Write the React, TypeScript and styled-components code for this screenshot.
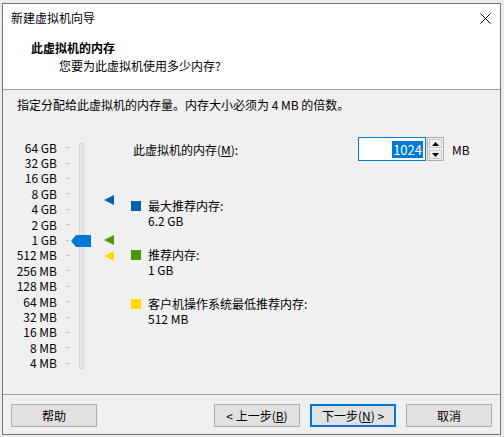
import React from 'react';
import styled, { createGlobalStyle } from 'styled-components';

const GlobalStyle = createGlobalStyle`
  html, body {
    margin: 0;
    padding: 0;
    background: #ececec;
  }
  body {
    font-family: "Noto Sans CJK SC", "Microsoft YaHei UI", sans-serif;
    font-size: 12px;
    color: #000;
  }
`;

// 刻度: 64 GB -> 4 MB
const scale = ['64 GB', '32 GB', '16 GB', '8 GB', '4 GB', '2 GB', '1 GB', '512 MB', '256 MB', '128 MB', '64 MB', '32 MB', '16 MB', '8 MB', '4 MB'];
const SCALE_HEIGHT = 231;
const ROW_H = SCALE_HEIGHT / scale.length;
const TRACK_OFFSET = 3;

// value (MB) -> y center inside the scale
const yFor = (mb: number) => ROW_H * (Math.log2(65536 / mb) + 0.5);

const markers = [
  { mb: 6.2 * 1024 - 90, color: '#0063b1' },
  { mb: 1024, color: '#4e9a06' },
  { mb: 512, color: '#ffd700' },
];

const legend = [
  { color: '#0063b1', title: '最大推荐内存:', value: '6.2 GB' },
  { color: '#4e9a06', title: '推荐内存:', value: '1 GB' },
  { color: '#ffd700', title: '客户机操作系统最低推荐内存:', value: '512 MB' },
];

const App: React.FC = () => {
  const current = 1024;

  return (
    <>
      <GlobalStyle />
      <Dialog>
        <TopPanel>
          <TitleBar>
            <span>新建虚拟机向导</span>
            <CloseIcon width="11" height="11" viewBox="0 0 11 11">
              <path d="M0.5 0.5 L10.5 10.5 M10.5 0.5 L0.5 10.5" stroke="#000" strokeWidth="1" fill="none" />
            </CloseIcon>
          </TitleBar>
          <Header>
            <HeaderTitle>此虚拟机的内存</HeaderTitle>
            <HeaderSub>您要为此虚拟机使用多少内存?</HeaderSub>
          </Header>
        </TopPanel>

        <Body>
          <Description>指定分配给此虚拟机的内存量。内存大小必须为 4 MB 的倍数。</Description>
          <MainRow>
            <SliderArea>
              <Scale>
                {scale.map((s) => (
                  <ScaleRow key={s}>
                    <span>{s}</span>
                    <Tick />
                  </ScaleRow>
                ))}
              </Scale>
              <Track>
                <Thumb style={{ top: yFor(current) - TRACK_OFFSET - 6 }}>
                  <svg width="20" height="12" viewBox="0 0 20 12">
                    <path d="M0 6 L5 0 H20 V12 H5 Z" fill="#0078d7" />
                  </svg>
                </Thumb>
              </Track>
              <Markers>
                {markers.map((m) => (
                  <Marker key={m.color} $color={m.color} style={{ top: yFor(m.mb) - 5 }} />
                ))}
              </Markers>
            </SliderArea>

            <InfoPanel>
              <MemoryRow>
                <MemoryLabel>
                  此虚拟机的内存(<U>M</U>):
                </MemoryLabel>
                <SpinBox>
                  <SpinInput>
                    <Selected>{current}</Selected>
                  </SpinInput>
                  <SpinButtons>
                    <SpinButton>
                      <svg width="7" height="4" viewBox="0 0 7 4">
                        <path d="M3.5 0 L7 4 H0 Z" fill="#000" />
                      </svg>
                    </SpinButton>
                    <SpinButton>
                      <svg width="7" height="4" viewBox="0 0 7 4">
                        <path d="M0 0 H7 L3.5 4 Z" fill="#000" />
                      </svg>
                    </SpinButton>
                  </SpinButtons>
                </SpinBox>
                <Unit>MB</Unit>
              </MemoryRow>

              <Legend>
                {legend.map((l) => (
                  <LegendItem key={l.title}>
                    <Swatch $color={l.color} />
                    <LegendText>
                      <div>{l.title}</div>
                      <div>{l.value}</div>
                    </LegendText>
                  </LegendItem>
                ))}
              </Legend>
            </InfoPanel>
          </MainRow>
        </Body>

        <Footer>
          <Button>帮助</Button>
          <Spacer />
          <Button>&lt; 上一步(<U>B</U>)</Button>
          <Button $focused>下一步(<U>N</U>) &gt;</Button>
          <Button>取消</Button>
        </Footer>
      </Dialog>
    </>
  );
};

export default App;

const Dialog = styled.div`
  margin: 3px 0 0 2px;
  width: 499px;
  height: 432px;
  box-sizing: border-box;
  border: 1px solid #757575;
  background: #f0f0f0;
  display: flex;
  flex-direction: column;
`;

const TopPanel = styled.div`
  background: #fff;
  height: 86px;
  box-sizing: border-box;
  border-bottom: 1px solid #a0a0a0;
`;

const TitleBar = styled.div`
  height: 28px;
  display: flex;
  align-items: center;
  justify-content: space-between;
  padding: 0 9px 0 8px;
  line-height: 18px;
`;

const CloseIcon = styled.svg`
  display: block;
  margin-top: 1px;
`;

const Header = styled.div`
  padding: 7px 0 0 28px;
  line-height: 18px;
`;

const HeaderTitle = styled.div`
  font-weight: bold;
`;

const HeaderSub = styled.div`
  margin-left: 28px;
`;

const Body = styled.div`
  flex: 1;
  padding: 6px 0 0 14px;
`;

const Description = styled.div`
  line-height: 18px;
`;

const MainRow = styled.div`
  display: flex;
  align-items: flex-start;
  margin-top: 23px;
  margin-left: -14px;
`;

const SliderArea = styled.div`
  display: flex;
  align-items: flex-start;
  height: ${SCALE_HEIGHT}px;
  margin-top: 3px;
`;

const Scale = styled.div`
  display: grid;
  grid-template-rows: repeat(${scale.length}, 1fr);
  height: ${SCALE_HEIGHT}px;
  width: 66px;
`;

const ScaleRow = styled.div`
  display: flex;
  align-items: center;
  justify-content: flex-end;
  line-height: 14px;
  white-space: nowrap;
`;

const Tick = styled.div`
  width: 3px;
  height: 1px;
  margin-left: 9px;
  background: #bdbdbd;
`;

const Track = styled.div`
  position: relative;
  margin: ${TRACK_OFFSET}px 0 0 10px;
  width: 5px;
  height: 226px;
  box-sizing: border-box;
  border: 1px solid #d6d6d6;
  background: #e7e7e7;
`;

const Thumb = styled.div`
  position: absolute;
  left: -9px;
  width: 20px;
  height: 12px;
  svg {
    display: block;
  }
`;

const Markers = styled.div`
  position: relative;
  width: 10px;
  height: ${SCALE_HEIGHT}px;
  margin-left: 20px;
`;

const Marker = styled.div<{ $color: string }>`
  position: absolute;
  left: 0;
  width: 0;
  height: 0;
  border-top: 5px solid transparent;
  border-bottom: 5px solid transparent;
  border-right: 10px solid ${({ $color }) => $color};
`;

const InfoPanel = styled.div`
  display: flex;
  flex-direction: column;
  margin-left: 17px;
`;

const MemoryRow = styled.div`
  display: flex;
  align-items: center;
  height: 24px;
`;

const MemoryLabel = styled.div`
  width: 225px;
  padding-left: 2px;
  line-height: 18px;
  margin-top: 2px;
`;

const U = styled.span`
  text-decoration: underline;
`;

const SpinBox = styled.div`
  display: flex;
  height: 24px;
`;

const SpinInput = styled.div`
  width: 68px;
  box-sizing: border-box;
  border: 1px solid #0078d7;
  background: #fff;
  display: flex;
  align-items: center;
  justify-content: flex-end;
  padding-right: 2px;
`;

const Selected = styled.span`
  background: #0078d7;
  color: #fff;
  line-height: 17px;
  font-size: 13px;
  padding: 0 1px;
`;

const SpinButtons = styled.div`
  display: flex;
  flex-direction: column;
  width: 17px;
  margin-left: 1px;
  box-sizing: border-box;
  border: 1px solid #adadad;
  background: #f0f0f0;
`;

const SpinButton = styled.div`
  flex: 1;
  display: flex;
  align-items: center;
  justify-content: center;
  margin: 1px;
  border: 1px solid #c8c8c8;
  background: #f0f0f0;
  svg {
    display: block;
  }
`;

const Unit = styled.div`
  margin-left: 8px;
  line-height: 18px;
  margin-top: 2px;
`;

const Legend = styled.div`
  display: flex;
  flex-direction: column;
  gap: 19px;
  margin-top: 37px;
`;

const LegendItem = styled.div`
  display: flex;
  align-items: flex-start;
`;

const Swatch = styled.div<{ $color: string }>`
  width: 10px;
  height: 10px;
  margin-top: 3px;
  background: ${({ $color }) => $color};
`;

const LegendText = styled.div`
  margin-left: 7px;
  line-height: 15px;
`;

const Footer = styled.div`
  display: flex;
  align-items: center;
  gap: 10px;
  border-top: 1px solid #a0a0a0;
  padding: 9px 8px 7px 8px;
`;

const Spacer = styled.div`
  flex: 1;
`;

const Button = styled.div<{ $focused?: boolean }>`
  width: 86px;
  height: 23px;
  box-sizing: border-box;
  display: flex;
  align-items: center;
  justify-content: center;
  background: #e1e1e1;
  border: ${({ $focused }) => ($focused ? '2px solid #0078d7' : '1px solid #adadad')};
  line-height: 18px;
  white-space: nowrap;
`;
